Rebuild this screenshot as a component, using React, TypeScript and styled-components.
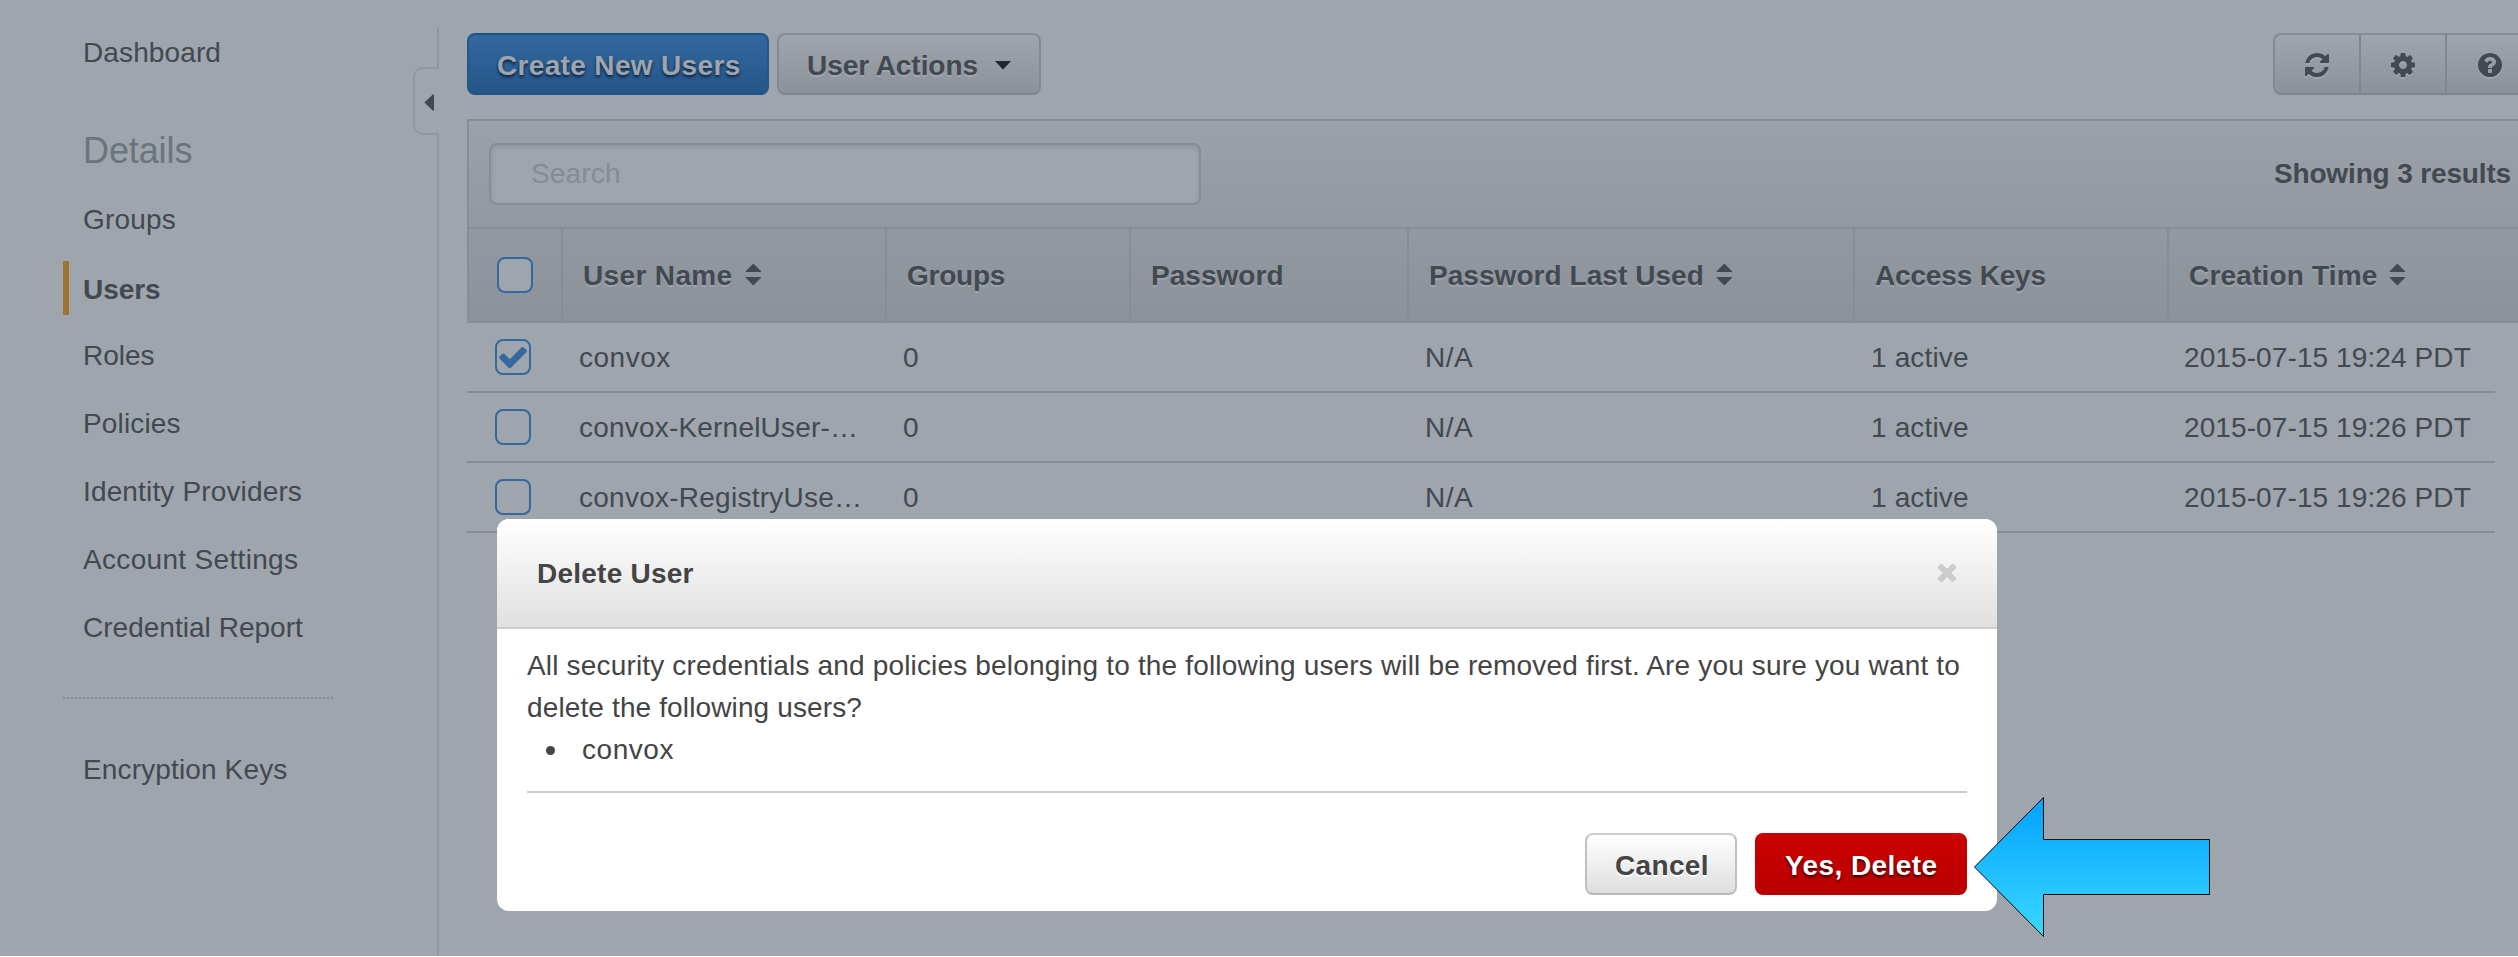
import React from "react";
import styled, { createGlobalStyle, css } from "styled-components";

const ink = "#424950";
const veil = "#9ea5ac";
const line = "#868d94";
const faintLine = "#90979e";
const blue = "#34689f";

const GlobalStyle = createGlobalStyle`
  *, *::before, *::after { box-sizing: border-box; }
  html, body { margin: 0; padding: 0; }
  body {
    background: #fff;
    color: ${ink};
    font-family: "Liberation Sans", Arial, sans-serif;
    font-size: 28px;
    overflow: hidden;
  }
  button { font: inherit; margin: 0; }
  ul { list-style: none; margin: 0; padding: 0; }
`;

/* ---------- shared ---------- */

const Text = styled.span<{ $track?: number }>`
  letter-spacing: ${(p) => p.$track ?? 0}px;
  white-space: nowrap;
`;

const Page = styled.div`
  position: relative;
  display: flex;
  width: 100%;
  height: 956px;
  background: ${veil};
  overflow: hidden;
`;

/* ---------- sidebar ---------- */

const Sidebar = styled.nav`
  flex: none;
  width: 413px;
  padding: 26px 0 0 63px;
`;

const NavList = styled.ul`
  display: flex;
  flex-direction: column;
  gap: 14px;
`;

const NavItem = styled.li<{ $active?: boolean }>`
  height: 54px;
  padding-left: 20px;
  line-height: 53px;
  ${(p) =>
    p.$active &&
    css`
      padding-top: 2px;
      padding-left: 14px;
      border-left: 6px solid #a0732f;
      font-weight: 700;
    `}
`;

const NavHeading = styled.h2`
  margin: 45px 0 17px;
  padding-left: 20px;
  color: #6c747b;
  font-size: 36px;
  font-weight: 400;
  line-height: 51px;
`;

const DottedRule = styled.div`
  width: 270px;
  height: 2px;
  margin: 42px 0 44px;
  background: repeating-linear-gradient(90deg, #868d94 0 2px, transparent 2px 4px);
`;

const Divider = styled.div`
  flex: none;
  display: flex;
  flex-direction: column;
  width: 26px;
  padding-top: 27px;
`;

const DividerLine = styled.div<{ $height?: number }>`
  ${(p) => (p.$height ? `height: ${p.$height}px;` : "flex: 1;")}
  border-right: 2px solid ${faintLine};
`;

const CollapseTab = styled.div`
  display: flex;
  align-items: center;
  height: 68px;
  padding: 3px 0 0 9px;
  border: 2px solid ${faintLine};
  border-right: 0;
  border-radius: 10px 0 0 10px;
`;

/* ---------- main ---------- */

const Main = styled.main`
  flex: 1;
  min-width: 0;
  padding: 33px 0 0 28px;
`;

const Toolbar = styled.div`
  display: flex;
  gap: 8px;
  height: 62px;
  margin-bottom: 24px;
`;

const buttonTones = {
  plain: css`
    background: linear-gradient(#9ea5ac, #8c9299);
    border-color: #868d94 #82898f #7d848b;
    color: ${ink};
    text-shadow: 0 2px 1px rgba(170, 177, 184, 0.6);
  `,
  primary: css`
    background: linear-gradient(#34699f, #245588);
    background-origin: border-box;
    border-color: #1f5288 #23568b #22548a;
    color: ${veil};
    text-shadow: 0 2px 3px rgba(0, 10, 30, 0.75);
  `,
  light: css`
    background: linear-gradient(#ffffff, #dedede);
    border-color: #cccccc #c0c0c0 #b8b8b8;
    color: #444;
    text-shadow: 0 2px 1px #fff;
  `,
  danger: css`
    background: linear-gradient(#cc0000, #b90000);
    background-origin: border-box;
    border-color: #cc0000 #c20000 #b90000;
    color: #fff;
    text-shadow: 0 2px 3px rgba(0, 0, 0, 0.75);
  `,
};

const Button = styled.button<{ $tone: keyof typeof buttonTones; $width: number }>`
  display: flex;
  flex: none;
  align-items: flex-start;
  width: ${(p) => p.$width}px;
  height: 62px;
  padding: 2px 0 0 28px;
  border: 2px solid;
  border-radius: 8px;
  font-weight: 700;
  line-height: 57px;
  ${(p) => buttonTones[p.$tone]}
`;

const Caret = styled.svg`
  flex: none;
  margin: 24px 0 0 17px;
`;

const IconGroup = styled.div`
  display: flex;
  flex: none;
  height: 62px;
  margin: 0 -17px 0 auto;
  border: 2px solid;
  border-radius: 8px;
  ${buttonTones.plain}
`;

const IconButton = styled.button`
  width: 86px;
  padding: 1px 0 0;
  display: flex;
  align-items: center;
  justify-content: center;
  background: none;
  border: 0;
  border-right: 2px solid #80878e;
  color: inherit;
  &:last-child { border-right: 0; }
  svg { filter: drop-shadow(0 2px 0 rgba(170, 177, 184, 0.5)); }
`;

const Panel = styled.section`
  border: 2px solid ${line};
  border-right: 0;
  background: linear-gradient(#9aa1a8, #8b9299);
`;

const FilterBar = styled.div`
  display: flex;
  justify-content: space-between;
  height: 108px;
  padding: 22px 7px 0 20px;
  border-bottom: 2px solid ${line};
`;

const SearchBox = styled.div`
  width: 712px;
  height: 62px;
  padding-left: 40px;
  border: 2px solid ${line};
  border-radius: 8px;
  background: ${veil};
  box-shadow: inset 0 2px 4px rgba(110, 118, 126, 0.35);
  color: #858c93;
  line-height: 57px;
`;

const ResultCount = styled.div`
  padding-top: 2px;
  font-weight: 700;
  line-height: 57px;
`;

const HeaderRow = styled.div`
  display: grid;
  grid-template-columns: 92px 324px 244px 278px 446px 314px 1fr;
  height: 92px;
`;

const HeaderCell = styled.div`
  display: flex;
  padding: 1px 0 0 20px;
  border-left: 2px solid ${line};
  font-weight: 700;
  line-height: 91px;
  text-shadow: 0 2px 1px rgba(165, 172, 179, 0.7);
`;

const HeaderCheckCell = styled.div`
  padding: 28px 0 0 28px;
`;

const SortMark = styled.svg`
  margin: 33px 0 0 12px;
`;

const BodyRow = styled.div`
  display: grid;
  grid-template-columns: 95px 324px 244px 278px 446px 313px 1fr;
  width: 2028px;
  height: 70px;
  border-bottom: 2px solid ${line};
`;

const Cell = styled.div`
  padding: 1px 0 0 17px;
  line-height: 67px;
`;

const CheckCell = styled.div`
  padding: 16px 0 0 28px;
`;

const CheckSquare = styled.div`
  display: flex;
  align-items: center;
  justify-content: center;
  width: 36px;
  height: 36px;
  border: 2px solid ${blue};
  border-radius: 8px;
  background: ${veil};
  color: ${blue};
`;

/* ---------- dialog ---------- */

const Dialog = styled.section`
  position: absolute;
  left: 497px;
  top: 519px;
  width: 1500px;
  height: 392px;
  border-radius: 12px;
  background: #fff;
  color: #444;
  overflow: hidden;
`;

const DialogHeader = styled.header`
  display: flex;
  justify-content: space-between;
  height: 110px;
  padding: 0 36px 0 40px;
  border-bottom: 2px solid #ccc;
  background: linear-gradient(#ffffff, #e0e0e0);
`;

const DialogTitle = styled.h3`
  margin: 0;
  font-size: 28px;
  font-weight: 700;
  line-height: 109px;
`;

const CloseIcon = styled.svg`
  margin-top: 39px;
`;

const DialogBody = styled.div`
  margin: 0 30px;
  height: 164px;
  padding-top: 16px;
  border-bottom: 2px solid #ccc;
  line-height: 42px;
`;

const Sentence = styled.p`
  margin: 0;
`;

const DoomedUser = styled.li`
  display: flex;
  align-items: center;
  &::before {
    content: "";
    width: 9px;
    height: 9px;
    margin: 1px 27px 0 19px;
    border-radius: 50%;
    background: #444;
  }
`;

const DialogActions = styled.footer`
  display: flex;
  justify-content: flex-end;
  gap: 18px;
  padding: 40px 30px 0;
`;

const PointerArrow = styled.svg`
  position: absolute;
  left: 1970px;
  top: 792px;
`;

/* ---------- icons ---------- */

const glyphs = {
  refresh:
    "M1639 1056q0 5-1 7-64 268-268 434.500t-478 166.500q-146 0-282.500-55t-243.500-157l-129 129q-19 19-45 19t-45-19-19-45v-448q0-26 19-45t45-19h448q26 0 45 19t19 45-19 45l-137 137q71 66 161 102t187 36q134 0 250-65t186-179q11-17 53-117 8-23 30-23h192q13 0 22.500 9.500t9.500 22.500zm25-800v448q0 26-19 45t-45 19h-448q-26 0-45-19t-19-45 19-45l138-138q-148-137-349-137-134 0-250 65t-186 179q-11 17-53 117-8 23-30 23h-199q-13 0-22.500-9.500t-9.500-22.500v-7q65-268 270-434.500t480-166.500q146 0 284 55.500t245 156.500l130-129q19-19 45-19t45 19 19 45z",
  cog: "M1152 896q0-106-75-181t-181-75-181 75-75 181 75 181 181 75 181-75 75-181zm512-109v222q0 12-8 23t-20 13l-185 28q-19 54-39 91 35 50 107 138 10 12 10 25t-9 23q-27 37-99 108t-94 71q-12 0-26-9l-138-108q-44 23-91 38-16 136-29 186-7 28-36 28h-222q-14 0-24.500-8.500t-11.500-21.500l-28-184q-49-16-90-37l-141 107q-10 9-25 9-14 0-25-11-126-114-165-168-7-10-7-23 0-12 8-23 15-21 51-66.500t54-70.500q-27-50-41-99l-183-27q-13-2-21-12.500t-8-23.500v-222q0-12 8-23t19-13l186-28q14-46 39-92-40-57-107-138-10-12-10-24 0-10 9-23 26-36 98.500-107.500t94.500-71.500q13 0 26 10l138 107q44-23 91-38 16-136 29-186 7-28 36-28h222q14 0 24.500 8.500t11.500 21.500l28 184q49 16 90 37l142-107q9-9 24-9 13 0 25 10 129 119 165 170 7 8 7 22 0 12-8 23-15 21-51 66.500t-54 70.500q26 50 41 98l183 28q13 2 21 12.500t8 23.500z",
  help: "M1024 1376v-192q0-14-9-23t-23-9h-192q-14 0-23 9t-9 23v192q0 14 9 23t23 9h192q14 0 23-9t9-23zm256-672q0-88-55.500-163t-138.500-116-170-41q-243 0-371 213-15 24 8 42l132 100q7 6 19 6 16 0 25-12 53-68 86-92 34-24 86-24 48 0 85.500 26t37.500 59q0 38-20 61t-68 45q-63 28-115.500 86.500t-52.500 125.500v36q0 14 9 23t23 9h192q14 0 23-9t9-23q0-19 21.500-49.500t54.500-49.500q32-18 49-28.500t46-35 44.500-48 28-60.500 12.500-81zm384 192q0 209-103 385.500t-279.500 279.500-385.500 103-385.500-103-279.500-279.500-103-385.500 103-385.500 279.500-279.500 385.500-103 385.500 103 279.500 279.500 103 385.500z",
  check:
    "M1671 566q0 40-28 68l-724 724-136 136q-28 28-68 28t-68-28l-136-136-362-362q-28-28-28-68t28-68l136-136q28-28 68-28t68 28l294 295 656-657q28-28 68-28t68 28l136 136q28 28 28 68z",
  times:
    "M1490 1322q0 40-28 68l-136 136q-28 28-68 28t-68-28l-294-294-294 294q-28 28-68 28t-68-28l-136-136q-28-28-28-68t28-68l294-294-294-294q-28-28-28-68t28-68l136-136q28-28 68-28t68 28l294 294 294-294q28-28 68-28t68 28l136 136q28 28 28 68t-28 68l-294 294 294 294q28 28 28 68z",
};

function Glyph({ name, size }: { name: keyof typeof glyphs; size: number }) {
  return (
    <svg width={size} height={size} viewBox="0 0 1792 1792" fill="currentColor">
      <path d={glyphs[name]} />
    </svg>
  );
}

function Sorter() {
  return (
    <SortMark width="17" height="24" viewBox="0 0 17 24" fill={ink}>
      <path d="M.7 8.200 8.300 .5 16 8.200v.8H.7zM.7 14h15.300v.8L8.300 22.600.7 14.800z" />
    </SortMark>
  );
}

/* ---------- data ---------- */

const navItems = [
  { label: "Groups", track: 0.176 },
  { label: "Users", track: -0.065, active: true },
  { label: "Roles", track: 0 },
  { label: "Policies", track: 0.15 },
  { label: "Identity Providers", track: 0.15 },
  { label: "Account Settings", track: 0.325 },
  { label: "Credential Report", track: 0.021 },
];

const headers = [
  { label: "User Name", track: 0.36, sort: true },
  { label: "Groups", track: -0.25 },
  { label: "Password", track: 0.033 },
  { label: "Password Last Used", track: 0.055, sort: true },
  { label: "Access Keys", track: -0.173 },
  { label: "Creation Time", track: 0.173, sort: true },
];

const users = [
  { name: "convox", track: 0.5, created: "2015-07-15 19:24 PDT", checked: true },
  { name: "convox-KernelUser-…", track: 0.2, created: "2015-07-15 19:26 PDT" },
  { name: "convox-RegistryUse…", track: 0.25, created: "2015-07-15 19:26 PDT" },
];

export default function App() {
  return (
    <>
      <GlobalStyle />
      <Page>
        <Sidebar>
          <NavList>
            <NavItem><Text $track={0.12}>Dashboard</Text></NavItem>
          </NavList>
          <NavHeading><Text $track={-0.107}>Details</Text></NavHeading>
          <NavList>
            {navItems.map((n) => (
              <NavItem key={n.label} $active={n.active}>
                <Text $track={n.track}>{n.label}</Text>
              </NavItem>
            ))}
          </NavList>
          <DottedRule />
          <NavList>
            <NavItem><Text $track={0.14}>Encryption Keys</Text></NavItem>
          </NavList>
        </Sidebar>

        <Divider>
          <DividerLine $height={40} />
          <CollapseTab>
            <svg width="10" height="17" viewBox="0 0 10 17" fill={ink}>
              <path d="M.3 8.500 8.800 .5H10v16H8.800z" />
            </svg>
          </CollapseTab>
          <DividerLine />
        </Divider>

        <Main>
          <Toolbar>
            <Button $tone="primary" $width={302}>
              <Text $track={0.34}>Create New Users</Text>
            </Button>
            <Button $tone="plain" $width={264}>
              <Text $track={-0.06}>User Actions</Text>
              <Caret width="16" height="9" viewBox="0 0 16 9" fill="#1f262d">
                <path d="M0 0h16L8 8.500z" />
              </Caret>
            </Button>
            <IconGroup>
              <IconButton><Glyph name="refresh" size={28} /></IconButton>
              <IconButton><Glyph name="cog" size={28} /></IconButton>
              <IconButton><Glyph name="help" size={28} /></IconButton>
            </IconGroup>
          </Toolbar>

          <Panel>
            <FilterBar>
              <SearchBox><Text $track={0.15}>Search</Text></SearchBox>
              <ResultCount><Text $track={-0.15}>Showing 3 results</Text></ResultCount>
            </FilterBar>
            <HeaderRow>
              <HeaderCheckCell><CheckSquare /></HeaderCheckCell>
              {headers.map((h) => (
                <HeaderCell key={h.label}>
                  <Text $track={h.track}>{h.label}</Text>
                  {h.sort && <Sorter />}
                </HeaderCell>
              ))}
            </HeaderRow>
          </Panel>
          {users.map((u) => (
            <BodyRow key={u.name}>
              <CheckCell>
                <CheckSquare>{u.checked && <Glyph name="check" size={32} />}</CheckSquare>
              </CheckCell>
              <Cell><Text $track={u.track}>{u.name}</Text></Cell>
              <Cell><Text>0</Text></Cell>
              <Cell />
              <Cell><Text $track={0.5}>N/A</Text></Cell>
              <Cell><Text $track={0.15}>1 active</Text></Cell>
              <Cell><Text $track={0.1}>{u.created}</Text></Cell>
            </BodyRow>
          ))}
        </Main>

        <Dialog>
          <DialogHeader>
            <DialogTitle><Text $track={0.241}>Delete User</Text></DialogTitle>
            <CloseIcon width="28" height="28" viewBox="0 0 1792 1792" fill="#ccc">
              <path d={glyphs.times} />
            </CloseIcon>
          </DialogHeader>
          <DialogBody>
            <Sentence>
              <Text $track={0.168}>
                All security credentials and policies belonging to the following users will be removed first. Are you sure you want to
              </Text>
            </Sentence>
            <Sentence>
              <Text $track={0.13}>delete the following users?</Text>
            </Sentence>
            <ul>
              <DoomedUser><Text $track={0.55}>convox</Text></DoomedUser>
            </ul>
          </DialogBody>
          <DialogActions>
            <Button $tone="light" $width={152}>
              <Text $track={0.35}>Cancel</Text>
            </Button>
            <Button $tone="danger" $width={212}>
              <Text $track={0.42}>Yes, Delete</Text>
            </Button>
          </DialogActions>
        </Dialog>

        <PointerArrow width="244" height="150" viewBox="0 0 244 150">
          <defs>
            <linearGradient id="arrowFill" x1="0" y1="0" x2="0" y2="1">
              <stop offset="0" stopColor="#00a2ff" />
              <stop offset="1" stopColor="#3cd8ff" />
            </linearGradient>
          </defs>
          <path
            d="M4.500 75 73.500 5.500V47.500H239.500V102.500H73.500V144.500z"
            fill="url(#arrowFill)"
            stroke="#0a0a0a"
            strokeWidth="1"
          />
        </PointerArrow>
      </Page>
    </>
  );
}
